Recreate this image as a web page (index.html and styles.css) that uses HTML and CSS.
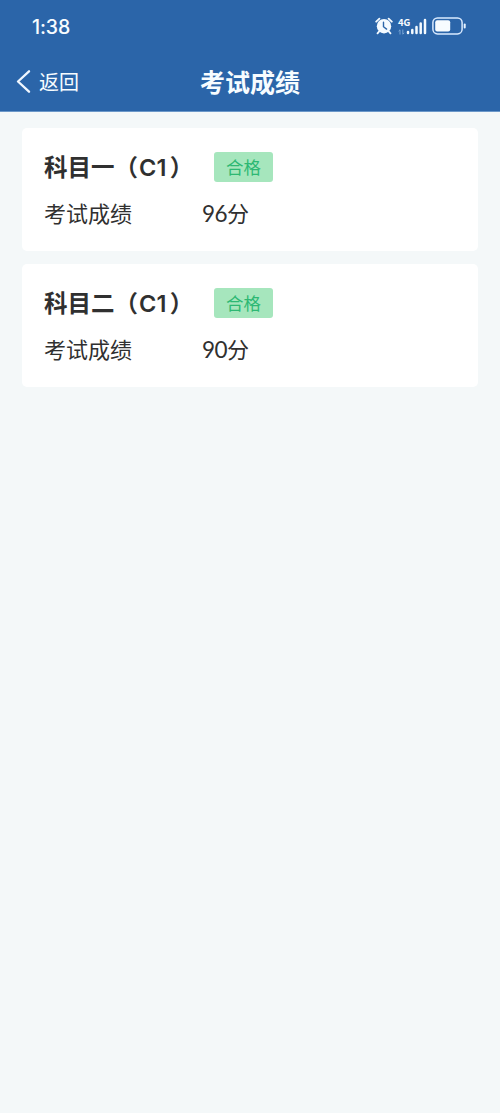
FILE: index.html
```html
<!DOCTYPE html>
<html lang="zh-CN">
<head>
<meta charset="utf-8">
<title>考试成绩</title>
<link rel="stylesheet" href="styles.css">
</head>
<body>
<header class="header">
  <div class="status">
    <span class="clock">1:38</span>
    <div class="indicators">
      <svg class="alarm" width="18" height="18" viewBox="0 0 18 18" fill="none">
        <circle cx="9" cy="9.2" r="7.2" fill="#f4faff"/>
        <path d="M1.2 4.7 4.4 1.6M16.8 4.7l-3.2-3.1M4 14.6l-1.5 1.7M14 14.6l1.5 1.7" stroke="#f4faff" stroke-width="1.8" stroke-linecap="round"/>
        <path d="M8.5 5.2v4.5l3.1 2.4" stroke="#2b65a9" stroke-width="1.4" stroke-linecap="round"/>
      </svg>
      <div class="mobile">
        <div class="network"><span class="generation">4G</span>
          <svg class="arrows" width="7" height="6" viewBox="0 0 7 6" fill="none" stroke="#82acd9" stroke-width=".9"><path d="M2 5.5V.8L.6 2.2M4.8.5v4.7l1.4-1.4"/></svg>
        </div>
        <svg class="bars" width="21" height="17" viewBox="0 0 21 17" stroke="#f4faff" stroke-width="2.5" stroke-linecap="round"><path d="M2 14.1v.8M6.3 12v2.9M10.5 9v5.9M14.7 5.5v9.4M19 2v12.9"/></svg>
      </div>
      <svg class="battery" width="35" height="18" viewBox="0 0 35 18" fill="none">
        <rect x=".9" y=".9" width="29.2" height="16" rx="4.6" stroke="#d9eaff" stroke-width="1.5"/>
        <rect x="3.2" y="3.2" width="15" height="11.4" rx="2" fill="#f7fcff"/>
        <path d="M32.7 7.5v3" stroke="#e5f2ff" stroke-width="2" stroke-linecap="round"/>
      </svg>
    </div>
  </div>
  <nav class="nav">
    <a class="back">
      <svg width="15" height="24" viewBox="0 0 15 24" fill="none" stroke="#f0f7ff" stroke-width="2.3" stroke-linecap="round" stroke-linejoin="round"><path d="M13 1.3 2 11.5l11 10.2"/></svg>
      <span>返回</span>
    </a>
    <h1 class="title">考试成绩</h1>
  </nav>
</header>
<main class="results">
  <section class="card">
    <div class="heading"><h2 class="subject">科目一（<span class="class">C1</span>）</h2><span class="badge">合格</span></div>
    <div class="score"><span class="label">考试成绩</span><span class="value">96<span class="unit">分</span></span></div>
  </section>
  <section class="card">
    <div class="heading"><h2 class="subject">科目二（<span class="class">C1</span>）</h2><span class="badge">合格</span></div>
    <div class="score"><span class="label">考试成绩</span><span class="value">90<span class="unit">分</span></span></div>
  </section>
</main>
</body>
</html>
```
FILE: styles.css
```css
* { box-sizing: border-box; }
body {
  margin: 0;
  min-height: 1113px;
  background: #f4f8f9;
  color: #303030;
  font-family: "Noto Sans CJK SC", sans-serif;
}
.header {
  height: 112px;
  background: #2b65a9;
  border-bottom: 1px solid #6c98c9;
  color: #f7fcff;
}
.status {
  height: 52px;
  padding: 0 33px 0 32px;
  display: flex;
  align-items: center;
  justify-content: space-between;
}
.clock { font: 500 19.5px/24px Inter, sans-serif; padding-top: 2px; letter-spacing: -.1px; }
.indicators { display: flex; align-items: center; }
.mobile { display: flex; margin: 0 5px 0 5px; height: 17px; }
.network { width: 8px; display: flex; flex-direction: column; }
.generation { font: 700 9.5px/8px "Noto Sans CJK SC", sans-serif; }
.arrows { margin-top: 3px; }
.nav {
  height: 59px;
  padding: 0 16px;
  display: grid;
  grid-template-columns: 1fr auto 1fr;
  align-items: center;
}
.back { display: flex; align-items: center; gap: 8px; font-size: 20px; line-height: 28px; }
.title { margin: 0; padding-bottom: 2px; font-size: 25px; line-height: 34px; font-weight: 700; }
.results { padding: 16px 22px; display: grid; gap: 13.5px; }
.card {
  height: 122.5px;
  padding: 23.5px 22px 0;
  border-radius: 5px;
  background: #fff;
}
.heading { display: flex; height: 30px; align-items: center; }
.subject {
  margin: 0;
  width: 170px;
  padding-bottom: 1px;
  font-size: 23.5px;
  line-height: 30px;
  font-weight: 700;
  white-space: nowrap;
}
.class { margin: 0 3px 0 1px; font-family: Inter, sans-serif; font-weight: 600; line-height: 1; letter-spacing: .3px; }
.badge {
  width: 59px;
  height: 30px;
  border-radius: 3px;
  background: #a6e6bd;
  color: #2db873;
  font-size: 17.5px;
  line-height: 30px;
  text-align: center;
}
.score { display: flex; align-items: baseline; margin-top: 14.5px; font-size: 22px; line-height: 32px; }
.label { width: 158px; }
.value { font-family: Lato, sans-serif; font-size: 22.5px; letter-spacing: -.6px; }
.unit { font-family: "Noto Sans CJK SC", sans-serif; font-size: 22px; }
```
